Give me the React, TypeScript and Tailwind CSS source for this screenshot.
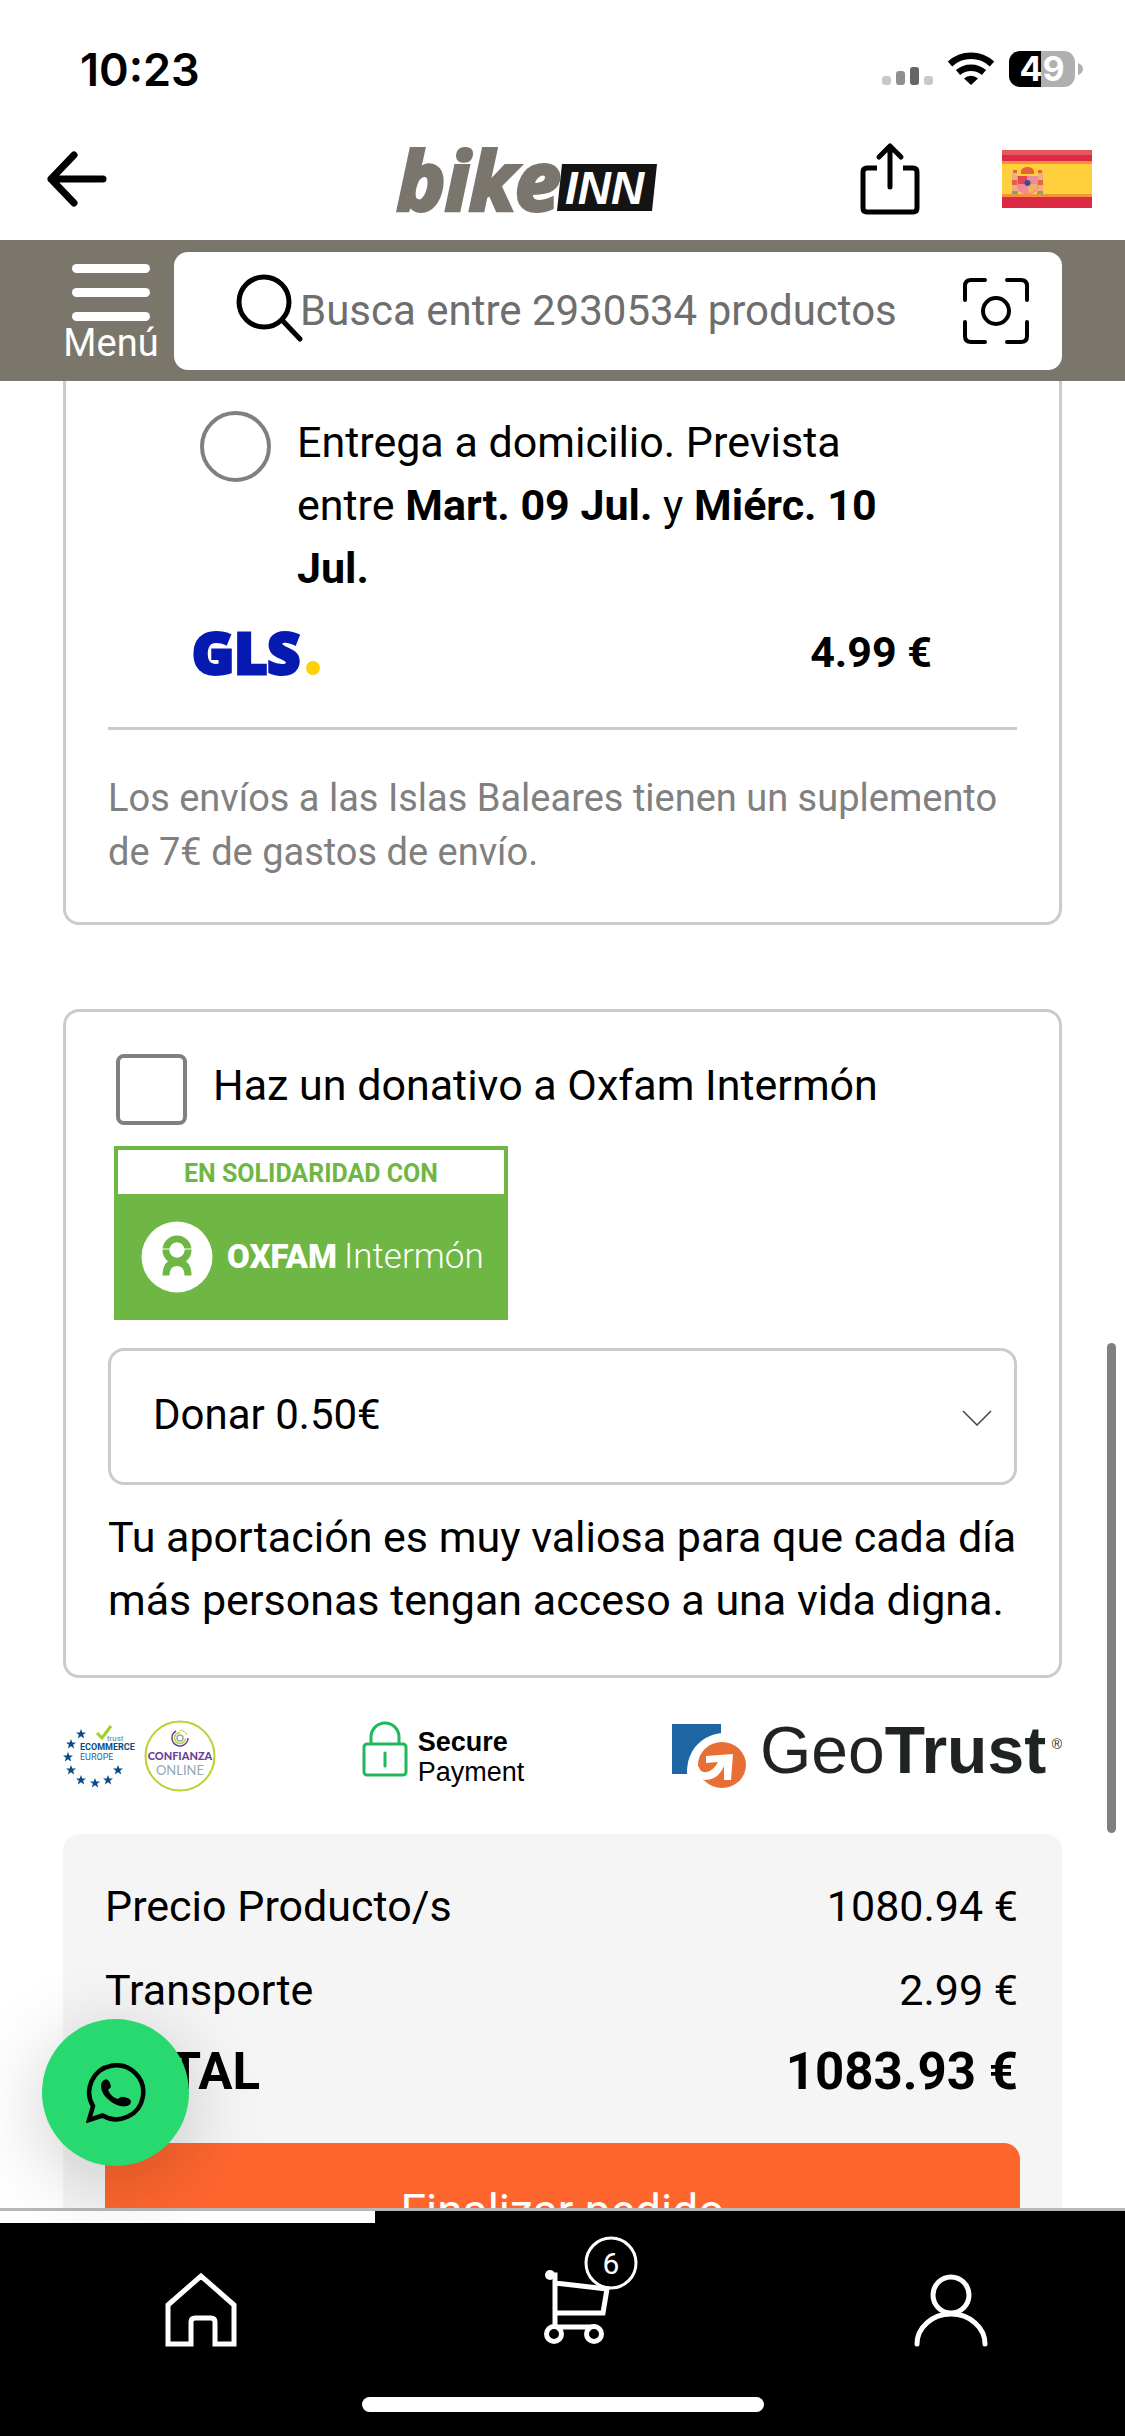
import type { ReactNode } from "react";

const STARS = [
  [18, 14],
  [8, 24],
  [5, 37],
  [8, 50],
  [18, 60],
  [32, 63],
  [45, 60],
  [55, 50],
];

const StatusBar = () => (
  <div className="flex h-[120px] shrink-0 items-center justify-between pt-[18px] pr-[42px] pl-20">
    <span className="font-['Inter',sans-serif] text-[45px] leading-none font-semibold">
      10:23
    </span>
    <svg width="202" height="40" viewBox="0 0 202 40" aria-hidden="true">
      <rect x="1" y="27" width="9" height="9" rx="3" fill="#c8c8c8" />
      <rect x="15" y="22" width="9" height="14" rx="3" fill="#8f8f8f" />
      <rect x="29" y="18" width="9" height="18" rx="3" fill="#666" />
      <rect x="43" y="27" width="9" height="9" rx="3" fill="#c8c8c8" />
      <g fill="none" stroke="#000" strokeWidth="6.500">
        <path d="M69 15a31 31 0 0 1 42 0" />
        <path d="M77 23.500a20 20 0 0 1 26 0" />
      </g>
      <path d="M83 29.500a10 10 0 0 1 14 0L90 36z" fill="#000" />
      <path d="M139 2h21v36h-21a11 11 0 0 1-11-11V13a11 11 0 0 1 11-11z" fill="#000" />
      <path d="M160 2h23a11 11 0 0 1 11 11v14a11 11 0 0 1-11 11h-23z" fill="#b0b0b0" />
      <path d="M197 14q5 2 5 6t-5 6z" fill="#b0b0b0" />
      <text
        x="161"
        y="32"
        textAnchor="middle"
        fill="#fff"
        className="font-['Inter',sans-serif] text-[34px] font-bold"
      >
        49
      </text>
    </svg>
  </div>
);

const BikeInnLogo = () => (
  <svg width="262" height="80" viewBox="0 0 262 80" className="overflow-visible" role="img" aria-label="bikeinn">
    <text
      x="0"
      y="71"
      fill="#7a766e"
      stroke="#7a766e"
      strokeWidth="4"
      className="font-['Open_Sans',sans-serif] text-[81px] font-bold italic"
    >
      bike
    </text>
    <path d="M165 25h95l-5 47h-95z" fill="#141414" />
    <text
      x="168"
      y="65"
      fill="#fff"
      className="font-['Liberation_Sans',sans-serif] text-[46px] font-bold italic"
    >
      INN
    </text>
  </svg>
);

const SpainFlag = () => (
  <svg width="90" height="58" viewBox="0 0 90 58" role="img" aria-label="España">
    <path d="M0 0h90v58H0z" fill="#dc2a45" />
    <path d="M0 0h90v5H0z" fill="#e4575c" />
    <path d="M0 12h90v34H0z" fill="#ffd03c" />
    <path d="M0 11h90v3H0zM0 44h90v3H0z" fill="#f5913c" />
    <path d="M10 23h5v21h-5zM36 23h5v21h-5z" fill="#ecae86" />
    <path d="M10 30h5v5h-5zM36 30h5v5h-5zM11 20h4v3h-4zM36 20h4v3h-4z" fill="#e2653c" />
    <path d="M10 41h6v3h-6zM35 41h6v3h-6z" fill="#8d9a86" />
    <path d="M15 26h21v12q-2 6-10.500 6T15 38z" fill="#ee8a9a" />
    <path d="M16 26h9v8h-9z" fill="#e4464a" />
    <path d="M26 34h9v4q-1 4-9 5z" fill="#f4b06a" />
    <path d="M19 24q-1-7 6.500-7t6.500 7z" fill="#e8603e" />
    <circle cx="25.500" cy="33" r="3" fill="#3d4a9c" />
  </svg>
);

const Header = () => (
  <header className="flex h-[120px] shrink-0 items-center pr-[33px] pb-0.5 pl-[47px]">
    <button type="button" aria-label="Volver">
      <svg width="60" height="56" viewBox="0 0 60 56" fill="none" stroke="#000" strokeWidth="7" strokeLinecap="round" strokeLinejoin="round">
        <path d="M56 28H4M27 4 4 28l23 24" />
      </svg>
    </button>
    <div className="flex flex-1 justify-center pl-[88px]">
      <BikeInnLogo />
    </div>
    <div className="flex items-center gap-[82px]">
      <button type="button" aria-label="Compartir">
        <svg width="60" height="74" viewBox="0 0 60 74" fill="none" stroke="#000" strokeWidth="5">
          <path d="M17 26H7q-4 0-4 4v36q0 4 4 4h46q4 0 4-4V30q0-4-4-4H43" />
          <path d="M30 45V4M19 15 30 4l11 11" strokeLinecap="round" strokeLinejoin="round" />
        </svg>
      </button>
      <button type="button" aria-label="País">
        <SpainFlag />
      </button>
    </div>
  </header>
);

const SearchBar = () => (
  <div className="flex h-[141px] shrink-0 items-center bg-[#7a766c] px-[63px]">
    <button type="button" className="flex w-[96px] flex-col items-center pt-1.5 text-[38px] leading-[42px] text-white">
      <span className="mb-px flex flex-col gap-[15px]">
        <span className="h-[9px] w-[78px] rounded-full bg-white" />
        <span className="h-[9px] w-[78px] rounded-full bg-white" />
        <span className="h-[9px] w-[78px] rounded-full bg-white" />
      </span>
      Menú
    </button>
    <div className="ml-[15px] flex h-[118px] flex-1 items-center rounded-[14px] bg-white pr-[33px] pl-[62px]">
      <svg width="64" height="74" viewBox="0 0 64 74" className="shrink-0 overflow-visible" fill="none" stroke="#000" strokeWidth="5" strokeLinecap="round">
        <circle cx="28" cy="28" r="25" />
        <path d="m46 46 18 19" />
      </svg>
      <input
        type="search"
        aria-label="Buscar"
        placeholder="Busca entre 2930534 productos"
        className="min-w-0 flex-1 bg-transparent text-[42px] outline-none placeholder:text-[#6e6e6e]"
      />
      <button type="button" aria-label="Buscar con la cámara">
        <svg width="66" height="66" viewBox="0 0 66 66" fill="none" stroke="#000" strokeWidth="4" strokeLinecap="round">
          <path d="M2 22V8q0-6 6-6h14M44 2h14q6 0 6 6v14M64 44v14q0 6-6 6H44M22 64H8q-6 0-6-6V44" />
          <circle cx="33" cy="33" r="13" />
        </svg>
      </button>
    </div>
  </div>
);

const GlsLogo = () => (
  <svg width="132" height="48" viewBox="0 0 132 48" className="overflow-visible" role="img" aria-label="GLS">
    <text
      x="0"
      y="45"
      fill="#061ab1"
      stroke="#061ab1"
      strokeWidth="3"
      className="font-['Open_Sans',sans-serif] text-[57px] font-extrabold"
    >
      GLS
    </text>
    <circle cx="121" cy="39" r="7" fill="#ffd100" />
  </svg>
);

const ShippingCard = () => (
  <section className="rounded-b-[16px] border-x-[3px] border-b-[3px] border-[#cbcbcb] px-[42px] pt-[30px] pb-[43px]">
    <div className="pr-[85px] pl-[92px]">
      <div className="flex items-start gap-[26px]">
        <input
          type="radio"
          id="gls"
          name="envio"
          className="size-[71px] shrink-0 appearance-none rounded-full border-4 border-[#808080] checked:bg-[#808080]"
        />
        <label htmlFor="gls" className="flex-1">
          Entrega a domicilio. Prevista entre <b>Mart. 09 Jul.</b> y <b>Miérc. 10 Jul.</b>
        </label>
      </div>
      <div className="mt-[21px] -ml-2 flex items-center justify-between">
        <GlsLogo />
        <b>4.99 €</b>
      </div>
    </div>
    <hr className="mt-[43px] border-t-[3px] border-[#cbcbcb]" />
    <p className="mt-[41px] text-[38px] leading-[54px] text-[#808080]">
      Los envíos a las Islas Baleares tienen un suplemento de 7€ de gastos de envío.
    </p>
  </section>
);

const OxfamLogo = () => (
  <svg width="394" height="174" viewBox="0 0 394 174" className="mt-[21px] ml-1.5" role="img" aria-label="En solidaridad con Oxfam Intermón">
    <path d="M0 0h394v174H0z" fill="#6fb744" />
    <path d="M4 4h386v44H4z" fill="#fff" />
    <text x="197" y="36" textAnchor="middle" fill="#6fb744" className="text-[25px] font-bold">
      EN SOLIDARIDAD CON
    </text>
    <circle cx="63" cy="111" r="35.500" fill="#fff" />
    <g fill="none" stroke="#6fb744" strokeWidth="7">
      <circle cx="63" cy="104" r="11" />
      <path d="M52 129.500q0-13 11-13t11 13" />
    </g>
    <path d="M48 103h30" stroke="#fff" />
    <circle cx="63" cy="104" r="7.500" fill="#fff" />
    <text x="113" y="122" fill="#fff" className="text-[33px] font-black">
      OXFAM
    </text>
    <text x="230" y="122" fill="#fff" className="text-[35px] font-light">
      Intermón
    </text>
  </svg>
);

const DonationCard = () => (
  <section className="mt-[84px] rounded-[16px] border-[3px] border-[#cbcbcb] px-[42px] pt-[42px] pb-[43px]">
    <div className="flex items-start gap-[26px] pl-2">
      <input
        type="checkbox"
        id="donativo"
        className="size-[71px] shrink-0 appearance-none rounded-[8px] border-4 border-[#808080] checked:bg-[#808080]"
      />
      <label htmlFor="donativo">Haz un donativo a Oxfam Intermón</label>
    </div>
    <OxfamLogo />
    <div className="relative mt-7">
      <select
        aria-label="Importe del donativo"
        className="block h-[137px] w-full appearance-none rounded-[16px] border-[3px] border-[#cbcbcb] bg-white px-[42px] pb-1 text-[42px]"
      >
        <option>Donar 0.50€</option>
        <option>Donar 1.00€</option>
        <option>Donar 2.00€</option>
      </select>
      <svg width="30" height="16" viewBox="0 0 30 16" className="pointer-events-none absolute top-[62px] right-[25px]" fill="none" stroke="#444" strokeWidth="1.500">
        <path d="M1 1l14 14L29 1" />
      </svg>
    </div>
    <p className="mt-[21px]">
      Tu aportación es muy valiosa para que cada día más personas tengan acceso a una vida digna.
    </p>
  </section>
);

const EcommerceEurope = () => (
  <svg width="77" height="72" viewBox="0 0 77 72" role="img" aria-label="Ecommerce Europe trust">
    {STARS.map(([x, y]) => (
      <path
        key={`${x}-${y}`}
        transform={`translate(${x} ${y})`}
        d="M0-5l1.300 3.500H5L2.100.8 3.200 4.500 0 2.300l-3.200 2.200L-2.100.8-5-1.500h3.700z"
        fill="#0b4a86"
      />
    ))}
    <path d="M34 13l5 5 9-12" fill="none" stroke="#a4cd28" strokeWidth="3" />
    <text x="44" y="21" fill="#4f7fa8" className="text-[8px]">
      trust
    </text>
    <text x="17" y="30" fill="#0b4a86" className="text-[9px] font-bold">
      ECOMMERCE
    </text>
    <text x="17" y="40" fill="#2b639a" className="text-[9px]">
      EUROPE
    </text>
  </svg>
);

const ConfianzaOnline = () => (
  <svg width="72" height="72" viewBox="0 0 72 72" role="img" aria-label="Confianza Online">
    <circle cx="36" cy="36" r="34.500" fill="#fff" stroke="#bdd02e" strokeWidth="2" />
    <g fill="none">
      <circle cx="36" cy="18" r="3" stroke="#8fa9b8" strokeWidth="1.500" />
      <path d="M36 12.500a5.500 5.500 0 1 0 5.500 6" stroke="#bdd02e" strokeWidth="1.500" />
      <path d="M32 11a8 8 0 1 0 12 7" stroke="#6a3f98" strokeWidth="1.500" />
      <path d="M36 10a8 8 0 0 1 7 5" stroke="#bdd02e" />
    </g>
    <text x="36" y="40" textAnchor="middle" fill="#6a3f98" className="font-['Lato',sans-serif] text-[11px] font-black">
      CONFIANZA
    </text>
    <text x="36" y="55" textAnchor="middle" fill="#94a8b2" className="font-['Lato',sans-serif] text-[13px]">
      ONLINE
    </text>
  </svg>
);

const SecurePayment = () => (
  <div className="flex items-center gap-2.5 pr-0.5 font-['Liberation_Sans',sans-serif] text-[27px] leading-[30px]">
    <svg width="46" height="56" viewBox="0 0 46 56" fill="none" stroke="#1eb95a" strokeWidth="3" strokeLinecap="round" className="mb-3.5">
      <rect x="2" y="23" width="42" height="31" rx="3" />
      <path d="M9 22v-6a14 14 0 0 1 28 0v6M23 32v13" />
    </svg>
    <div className="pt-0.5">
      <b className="block">Secure</b>
      <span>Payment</span>
    </div>
  </div>
);

const GeoTrust = () => (
  <svg width="390" height="72" viewBox="0 0 390 72" className="overflow-visible" role="img" aria-label="GeoTrust">
    <path d="M0 4h49v50H0z" fill="#1d66a3" />
    <path d="M52 13C30 14 15 30 15 52q0 6 3 10h31z" fill="#fff" />
    <ellipse cx="50" cy="45" rx="24" ry="23" fill="#e76f36" />
    <path
      d="M34 36l27-2-2 26h-7V46Q46 60 33 60l-9-4v-9h3q1 6 8 5 7-2 11-10l-12 1z"
      fill="#fff"
    />
    <text x="88" y="53" fill="#1f2422" className="font-['Liberation_Sans',sans-serif] text-[66px]">
      Geo
      <tspan className="font-bold">Trust</tspan>
    </text>
    <text x="390" y="29" textAnchor="end" fill="#1f2422" className="font-['Liberation_Sans',sans-serif] text-[14px]">
      ®
    </text>
  </svg>
);

const Row = ({ label, value }: { label: string; value: string }) => (
  <div className="flex justify-between">
    <span>{label}</span>
    <span>{value}</span>
  </div>
);

const Summary = () => (
  <section className="rounded-[16px] bg-[#f5f5f5] px-[42px] pt-[41px] pb-10">
    <div className="flex flex-col gap-[21px] pr-0.5">
      <Row label="Precio Producto/s" value="1080.94 €" />
      <Row label="Transporte" value="2.99 €" />
    </div>
    <div className="mt-[18px] flex justify-between pr-0.5 text-[51px] font-bold">
      <span>TOTAL</span>
      <span>1083.93 €</span>
    </div>
    <button type="button" className="mt-10 h-[136px] w-full rounded-[16px] bg-[#ff662e] text-[46px] text-white">
      Finalizar pedido
    </button>
  </section>
);

const WhatsAppButton = () => (
  <button
    type="button"
    aria-label="WhatsApp"
    className="absolute bottom-[42px] left-[42px] flex size-[147px] items-center justify-center rounded-full bg-[#28d970] shadow-[0_16px_80px_rgba(0,0,0,0.2)]"
  >
    <svg width="60" height="60" viewBox="0 0 60 60">
      <path
        d="M7 43A27 27 0 1 1 16.500 52.500L3 57z"
        fill="none"
        stroke="#000"
        strokeWidth="4.500"
      />
      <path
        d="M16 19q3-4 6-2 3 3 3 7l-3 3q3 7 10 9 3-3 6-2 6 1 7 4 0 4-4 5-8 2-17-5T15 23q0-2 1-4z"
        fill="#000"
      />
    </svg>
  </button>
);

const NavLink = ({ label, children }: { label: string; children: ReactNode }) => (
  <a href="#" aria-label={label} className="flex justify-center pt-[26px]">
    <svg width="100" height="120" viewBox="0 0 100 120" fill="none" stroke="#fff" strokeWidth="5">
      {children}
    </svg>
  </a>
);

const BottomNav = () => (
  <nav className="shrink-0 border-t-[3px] border-[#b8b8b8] bg-black">
    <div className="h-3 w-1/3 bg-white" />
    <div className="grid h-[174px] grid-cols-[401px_1fr_349px]">
      <NavLink label="Inicio">
        <path d="M17 95V56L50 27l33 29v39H64V73q0-4-4-4H44q-4 0-4 4v22z" />
      </NavLink>
      <a href="#" aria-label="Cesta" className="flex justify-center">
        <svg width="100" height="146" viewBox="-5 0 100 146" fill="none" stroke="#fff" strokeWidth="5">
          <circle cx="67" cy="40" r="25" strokeWidth="3" />
          <text x="67" y="51" textAnchor="middle" fill="#fff" stroke="none" className="text-[30px]">
            6
          </text>
          <circle cx="6" cy="52" r="5" fill="#fff" stroke="none" />
          <path d="M6 52h5v50M11 60l52 6-4 24H11M9 104h43" />
          <circle cx="10" cy="111" r="7.500" fill="#000" />
          <circle cx="50" cy="111" r="7.500" fill="#000" />
        </svg>
      </a>
      <NavLink label="Mi cuenta">
        <circle cx="50" cy="46" r="18" />
        <path d="M16 95a34 30 0 0 1 68 0" strokeLinecap="round" />
      </NavLink>
    </div>
    <div className="mx-auto h-[15px] w-[402px] rounded-full bg-white" />
    <div className="h-6" />
  </nav>
);

const App = () => {
  return (
    <div className="flex h-screen flex-col bg-white font-['Roboto',sans-serif] text-[43px] leading-[63px] text-black">
      <StatusBar />
      <Header />
      <SearchBar />
      <div className="relative min-h-0 flex-1">
        <main className="h-full overflow-y-auto px-[63px] [scrollbar-width:none]">
          <ShippingCard />
          <DonationCard />
          <div className="flex h-[156px] items-center justify-between">
            <div className="flex items-center gap-1">
              <EcommerceEurope />
              <ConfianzaOnline />
            </div>
            <SecurePayment />
            <GeoTrust />
          </div>
          <Summary />
        </main>
        {/* scroll thumb */}
        <div className="absolute top-[962px] right-[9px] h-[490px] w-[9px] rounded-full bg-[#808080]" />
        <WhatsAppButton />
      </div>
      <BottomNav />
    </div>
  );
};

export default App;
